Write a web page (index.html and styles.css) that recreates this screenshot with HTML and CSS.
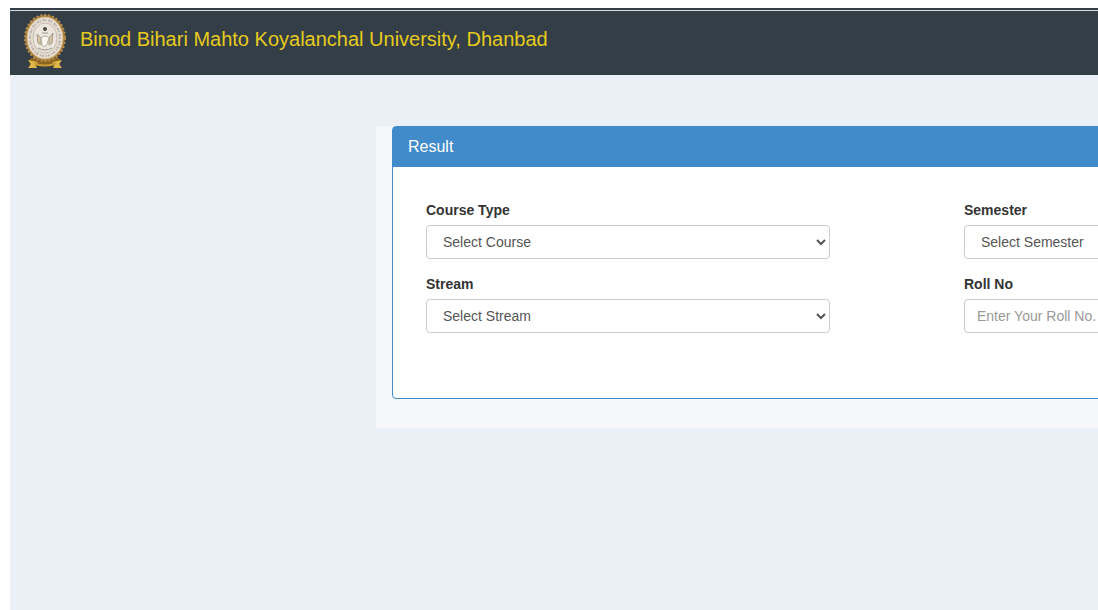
FILE: index.html
```
<!DOCTYPE html>
<html lang="en">
<head>
	<meta charset="UTF-8" />
	<title>Result</title>
	<link rel="stylesheet" href="styles.css">
</head>
<body>
	<div class="wrapper">
		<header class="navbar">
			<svg class="logo" width="44" height="56" viewBox="0 0 44 56">
				<path d="M8 44 L36 44 L38 47 L36 53 L27 51 L22 52 L17 51 L8 54 L6 47 Z" fill="#8a6420" />
				<path d="M5 46 L15 48 L12 50 L14 54 L5 54 L8 50 Z M39 46 L29 48 L32 50 L30 54 L39 54 L36 50 Z" fill="#dfb748" />
				<path d="M11 48 Q22 53 33 48 L32 51 Q22 54 12 51 Z" fill="#c99a35" />
				<ellipse cx="22" cy="24" rx="20" ry="23" fill="#9a733a" stroke="#b98f4a" stroke-width="2" stroke-dasharray="2 2" />
				<ellipse cx="22" cy="24" rx="18" ry="21" fill="#e6ddd2" stroke="#d8b878" />
				<ellipse cx="22" cy="24" rx="15" ry="18" fill="none" stroke="#b5aca3" stroke-width="2" stroke-dasharray="1 2 2 1" />
				<ellipse cx="22" cy="24" rx="12" ry="15" fill="#ebe5dc" stroke="#c6bdb0" />
				<circle cx="22" cy="15" r="2" fill="#4d4945" />
				<path d="M19 19 H25" stroke="#a39c94" />
				<path d="M14 20 L18 24 V31 L15 29 Z M30 19 L26 24 V31 L29 29 Z" fill="#d9c59b" stroke="#a59d90" />
				<path d="M18 24 Q22 20 26 24 L24 30 Q22 34 19 31 Z" fill="#fbf8f2" stroke="#b5aea4" />
				<path d="M15 34 Q22 38 29 34" fill="none" stroke="#9b948a" />
			</svg>
			<span class="brand">Binod Bihari Mahto Koyalanchal University, Dhanbad</span>
		</header>
		<main class="content">
			<section class="panel">
				<h1 class="panel-heading">Result</h1>
				<form class="panel-body">
					<div class="form-group">
						<label for="course">Course Type</label>
						<select class="form-control" id="course">
							<option>Select Course</option>
						</select>
					</div>
					<div class="form-group">
						<label for="semester">Semester</label>
						<select class="form-control" id="semester">
							<option>Select Semester</option>
						</select>
					</div>
					<div class="form-group">
						<label for="stream">Stream</label>
						<select class="form-control" id="stream">
							<option>Select Stream</option>
						</select>
					</div>
					<div class="form-group">
						<label for="roll">Roll No</label>
						<input class="form-control" id="roll" type="text" placeholder="Enter Your Roll No." />
					</div>
				</form>
			</section>
		</main>
	</div>
</body>
</html>
```

FILE: styles.css
```
* {
	box-sizing: border-box;
}
body {
	margin: 0;
	padding: 8px 0 0 10px;
	overflow: hidden;
	background-color: #fff;
	color: #333;
	font-family: "Liberation Sans", Arial, sans-serif;
	font-size: 14px;
	line-height: 20px;
}
.wrapper {
	min-height: calc(100vh - 8px);
	background-color: #ebeff6;
}
.navbar {
	display: flex;
	align-items: center;
	gap: 13px;
	height: 67px;
	padding: 0 13px;
	background-color: #333e47;
	background-image: linear-gradient(#d5d9dc, #d5d9dc);
	background-repeat: no-repeat;
	background-size: 100% 1px;
	background-position: 0 2px;
}
.logo {
	flex: none;
}
.brand {
	padding-bottom: 6px;
	color: #e6cb1d;
	font-size: 20px;
}
/* the form is wider than small windows, the rest is cut off */
.content {
	min-width: 1160px;
	margin: 51px 0 0 366px;
	padding: 0 16px 29px;
	background-color: #f6f7fa;
}
.panel {
	border: 1px solid #428bca;
	border-radius: 4px;
	background-color: #fff;
}
.panel-heading {
	margin: 0;
	padding: 10px 15px;
	background-color: #428bca;
	color: #fff;
	font-size: 16px;
	font-weight: normal;
}
.panel-body {
	display: grid;
	grid-template-columns: 538px 538px;
	gap: 15px 0;
	padding: 33px 33px 65px;
}
.form-group {
	width: 75%;
}
label {
	display: block;
	margin-bottom: 5px;
	font-weight: bold;
}
.form-control {
	display: block;
	width: 100%;
	height: 34px;
	padding: 6px 12px;
	border: 1px solid #ccc;
	border-radius: 4px;
	background-color: #fff;
	color: #555;
	font-family: inherit;
	font-size: 14px;
}
.form-control::placeholder {
	color: #999;
}
```
